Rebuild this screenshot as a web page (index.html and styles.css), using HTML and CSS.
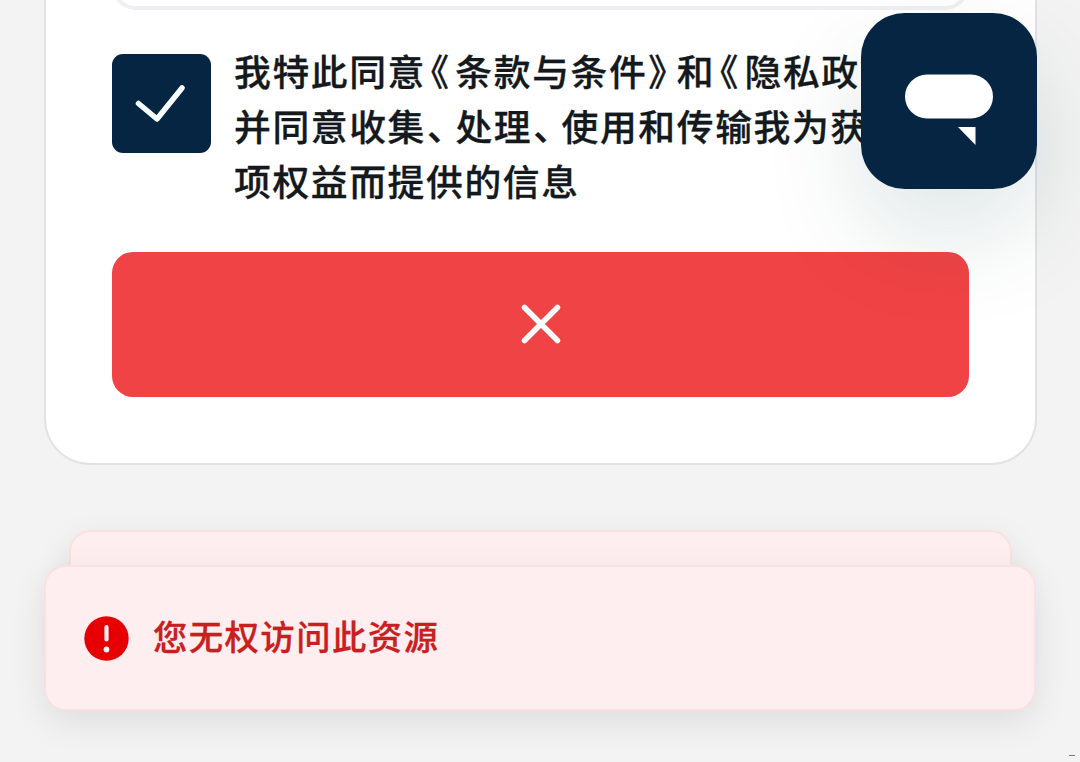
FILE: index.html
```
<!DOCTYPE html>
<html lang="zh-CN">
  <head>
    <meta charset="utf-8">
    <title>同意条款</title>
    <link rel="stylesheet" href="styles.css">
  </head>

  <body>
    <main class="card">
      <div class="field"></div>
      <div class="consent">
        <span class="checkbox">
          <svg width="99" height="99" viewBox="0 0 99 99"><path d="M26.500 49.500L45 65L70 34"/></svg>
        </span>
        <p class="terms">我特此同意<span class="open">《</span>条款与条件<span class="close">》</span>和<span class="open">《</span>隐私政策<span class="close">》</span><br>并同意收集<span class="close">、</span>处理<span class="close">、</span>使用和传输我为获得此<br>项权益而提供的信息</p>
      </div>
      <button class="submit">
        <svg width="44" height="44" viewBox="0 0 44 44"><path d="M5.500 4.500L38.500 37.500M38.500 4.500L5.500 37.500"/></svg>
      </button>
    </main>

    <div class="toasts">
      <div class="toast toast-back"></div>
      <div class="toast toast-front">
        <svg width="46" height="46" viewBox="0 0 46 46">
          <circle cx="23.500" cy="23.500" r="22.200" fill="#e60003"/>
          <path d="M23.500 12V24.500" stroke="#ffeeef" stroke-width="4.200" stroke-linecap="round"/>
          <circle cx="23.500" cy="34.500" r="2.900" fill="#ffeeef"/>
        </svg>
        <span class="message">您无权访问此资源</span>
      </div>
    </div>

    <div class="chat">
      <svg width="176" height="176" viewBox="0 0 176 176">
        <rect x="44" y="61.500" width="88" height="44" rx="22"/>
        <path d="M97 114H114.500V132Z"/>
      </svg>
    </div>
    <span class="mark"></span>
  </body>
</html>
```

FILE: styles.css
```
* {
  box-sizing: border-box;
}
body {
  position: relative;
  height: 762px;
  margin: 0;
  overflow: hidden;
  background-color: #f3f3f3;
  font-family: "Noto Sans CJK SC", sans-serif;
  font-weight: 500;
}
svg {
  display: block;
  flex: none;
}
.card {
  display: flow-root;
  width: 993px;
  height: 465px;
  margin-left: 44px;
  padding: 0 66px;
  border: 2px solid #e2e2e4;
  border-top: 0;
  border-radius: 0 0 46px 46px;
  background-color: #fff;
}
.field {
  height: 100px;
  margin-top: -90px;
  border: 4px solid #f0f0f4;
  border-radius: 24px;
}
.consent {
  display: flex;
  gap: 23px;
  height: 242px;
  padding-top: 44px;
}
.checkbox {
  flex: none;
  width: 99px;
  height: 99px;
  border-radius: 11px;
  background-color: #062542;
}
.checkbox path {
  fill: none;
  stroke: #f8fdff;
  stroke-width: 5.5;
  stroke-linecap: round;
  stroke-linejoin: round;
}
.terms {
  margin: -11px 0 0;
  color: #14191d;
  font-size: 36.8px;
  line-height: 55px;
  letter-spacing: 1.6px;
  white-space: nowrap;
  -webkit-text-stroke: 0.3px;
}
/* half-width punctuation */
.open,
.close {
  font-feature-settings: "halt";
}
.open {
  padding: 0 4.7px;
}
.close {
  padding: 0 8.4px 0 1px;
}
.submit {
  display: flex;
  align-items: center;
  justify-content: center;
  width: 857px;
  height: 145px;
  padding: 0;
  border: 0;
  border-radius: 21px;
  background-color: #f04345;
}
.submit path {
  fill: none;
  stroke: #fff;
  stroke-width: 5.5;
  stroke-linecap: round;
}
.toasts {
  margin: 65px 44px 0;
}
.toast {
  border: 2px solid #fbe0e2;
  border-radius: 22px;
  background-color: #ffeeef;
  box-shadow: 0 11px 36px rgba(0, 0, 0, 0.09);
}
.toast-back {
  height: 140px;
  margin: 0 24px -105px 25px;
}
.toast-front {
  position: relative;
  display: flex;
  align-items: center;
  gap: 24px;
  height: 146px;
  padding-left: 37px;
  color: #c9201f;
  font-size: 34.4px;
  letter-spacing: 1.4px;
  -webkit-text-stroke: 0.3px;
}
.message {
  padding-bottom: 6px;
}
.chat {
  position: absolute;
  top: 13px;
  left: 861px;
  width: 176px;
  height: 176px;
  border-radius: 44px;
  background-color: #062542;
  box-shadow: 0 44px 100px rgba(0, 60, 60, 0.13);
}
.chat svg {
  fill: #fff;
}
.mark {
  position: absolute;
  top: 755px;
  left: 1069px;
  width: 6px;
  height: 1px;
  background-color: #777;
}
```
